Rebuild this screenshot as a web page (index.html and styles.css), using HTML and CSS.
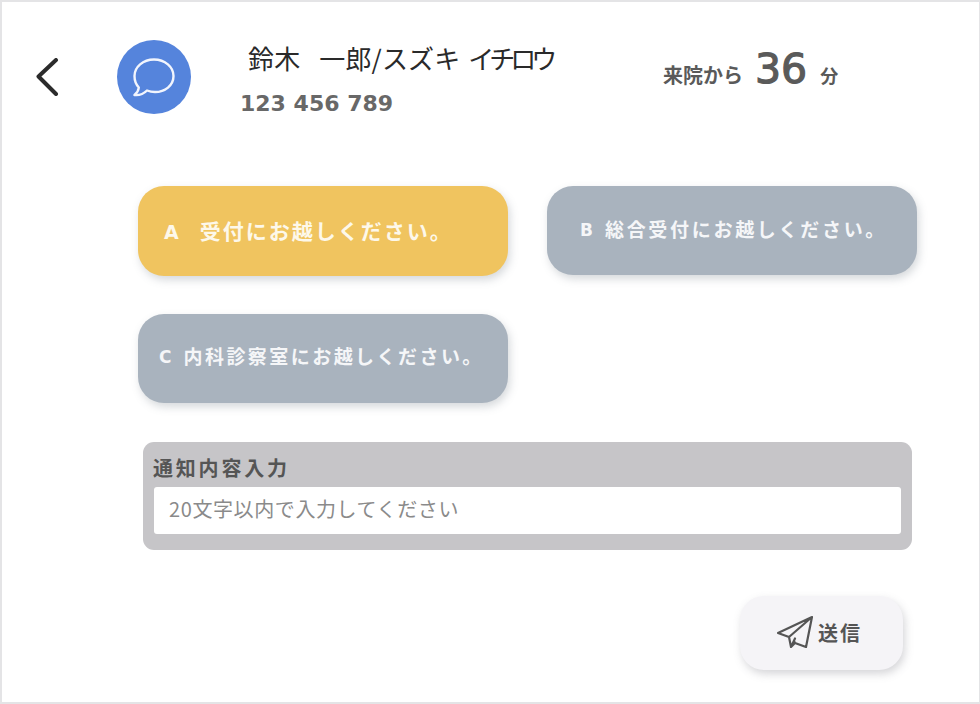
FILE: index.html
```html
<!DOCTYPE html>
<html lang="ja">
<head>
<meta charset="utf-8">
<title>通知</title>
<link rel="stylesheet" href="styles.css">
</head>
<body>
<div class="frame">
  <header class="head">
    <svg class="back" viewBox="0 0 24 38" width="24" height="38"><path d="M21 2 L3.500 18.500 L21 36" fill="none" stroke="#2b2b2b" stroke-width="4" stroke-linecap="round" stroke-linejoin="round"/></svg>
    <div class="avatar">
      <svg viewBox="0 0 44 39" width="44" height="39"><path d="M22 1.500 C33 1.500 41.500 9 41.500 18 C41.500 27.500 33 34 23 34 C20 34 17.500 33.500 15 32.500 C11.500 36 7.500 37.500 2.500 37 C5 35 6.500 32.500 6.800 29.500 C4 26.500 2.500 22.500 2.500 18 C2.500 9 11 1.500 22 1.500 Z" fill="none" stroke="#f2f5fd" stroke-width="2.400" stroke-linejoin="round"/></svg>
    </div>
    <div class="who">
      <div class="name"><span class="family">鈴木</span> 一郎/スズキ <span class="kana">イチロウ</span></div>
      <div class="num">123 456 789</div>
    </div>
    <div class="elapsed"><span class="lbl">来院から</span><span class="mins">36</span><span class="unit">分</span></div>
  </header>
  <main class="options">
    <button class="opt opt-a"><span class="key key-a">A</span>受付にお越しください。</button>
    <button class="opt opt-b"><span class="key">B</span>総合受付にお越しください。</button>
    <button class="opt opt-c"><span class="key">C</span>内科診察室にお越しください。</button>
  </main>
  <section class="panel">
    <div class="panel-title">通知内容入力</div>
    <div class="input">20文字以内で入力してください</div>
  </section>
  <div class="actions">
    <button class="send">
      <svg viewBox="0 0 36 32" width="36" height="32"><path d="M35 1 L1 17 L12 21 L14 31 L18 27 L29 31 Z M35 1 L12 21 M14 31 L18 22.500 M18 27 L17 25" fill="none" stroke="#555" stroke-width="2.200" stroke-linejoin="round" stroke-linecap="round"/></svg>
      <span>送信</span>
    </button>
  </div>
</div>
</body>
</html>
```
FILE: styles.css
```css
* { box-sizing: border-box; }
html, body { margin: 0; padding: 0; background: #fff; }
body { font-family: "Noto Sans CJK JP", "Open Sans", sans-serif; }
.frame {
  width: 980px;
  height: 704px;
  border: 2px solid #e4e4e6;
  border-right-width: 1px;
  overflow: hidden;
  background: #fff;
}
.head {
  display: flex;
  align-items: center;
  height: 150px;
  padding: 37px 0 37px 33px;
}
.back { flex: none; }
.avatar {
  flex: none;
  width: 74px;
  height: 74px;
  margin-left: 58px;
  border-radius: 50%;
  background: #5584dc;
  display: flex;
  align-items: center;
  justify-content: center;
}
.who { width: 423px; margin-left: 49px; padding-top: 4px; }
.name {
  margin-left: 8px;
  font-size: 26px;
  line-height: 38px;
  letter-spacing: 0.150px;
  word-spacing: 2px;
  color: #2a2a2a;
  white-space: nowrap;
}
.family { margin-right: 11px; }
.kana { letter-spacing: -5px; }
.num {
  margin-top: 12px;
  font-family: "DejaVu Sans", sans-serif;
  font-size: 22px;
  line-height: 30px;
  font-weight: 700;
  color: #686868;
}
.elapsed {
  display: flex;
  align-items: baseline;
  color: #5a5a5a;
  font-weight: 700;
  margin-top: -16px;
}
.lbl { font-size: 20px; }
.mins {
  font-family: "DejaVu Sans", sans-serif;
  font-size: 41px;
  line-height: 50px;
  font-weight: 400;
  -webkit-text-stroke: 1.200px #5a5a5a;
  margin: 0 13px 0 12px;
}
.unit { font-size: 18px; }
.options {
  display: grid;
  grid-template-columns: 370px 370px;
  grid-auto-rows: 89px;
  column-gap: 39px;
  row-gap: 39px;
  padding: 34px 0 0 136px;
}
.opt {
  display: flex;
  align-items: center;
  border: 0;
  border-radius: 26px;
  color: #f5f6f8;
  font-family: inherit;
  font-weight: 700;
  box-shadow: 2px 4px 8px rgba(120, 130, 140, 0.300);
  white-space: nowrap;
}
.opt-a { background: #f0c45f; padding: 0 0 2px 26px; margin-bottom: -1px; font-size: 21px; letter-spacing: 2px; color: #fdf8ea; }
.opt-b { background: #a9b3be; padding: 0 0 5px 33px; font-size: 19px; letter-spacing: 2.700px; }
.opt-c { background: #a9b3be; padding: 0 0 6px 21px; font-size: 19px; letter-spacing: 2.450px; }
.key { font-family: "DejaVu Sans", sans-serif; font-size: 17px; letter-spacing: 0; margin: 3px 12px 0 0; }
.key-a { font-size: 19px; margin-right: 21px; }
.panel {
  width: 769px;
  height: 108px;
  margin: 39px 0 0 141px;
  padding: 12px 10px 0 10px;
  border-radius: 11px;
  background: #c6c5c8;
}
.panel-title {
  font-size: 20px;
  line-height: 28px;
  letter-spacing: 2.800px;
  font-weight: 700;
  color: #555;
}
.input {
  height: 47px;
  margin: 5px 1px 0;
  padding-left: 15px;
  border-radius: 3px;
  background: #fff;
  font-size: 20px;
  line-height: 43px;
  letter-spacing: 0.600px;
  color: #8a8a8a;
}
.actions {
  display: flex;
  justify-content: flex-end;
  padding: 46px 76px 0 0;
}
.send {
  display: flex;
  align-items: center;
  justify-content: center;
  gap: 5px;
  width: 163px;
  height: 74px;
  padding: 0 4px 2px 0;
  border: 0;
  border-radius: 24px;
  background: #f5f4f7;
  color: #555;
  font-family: inherit;
  font-size: 20px;
  font-weight: 700;
  letter-spacing: 2px;
  box-shadow: 2px 4px 8px rgba(120, 120, 130, 0.300);
}
```
